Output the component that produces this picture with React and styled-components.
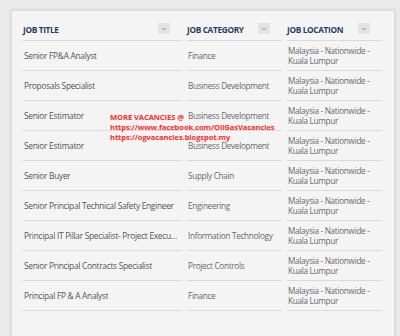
import React from 'react';
import styled, { createGlobalStyle } from 'styled-components';

const GlobalStyle = createGlobalStyle`
  html, body {
    margin: 0;
    padding: 0;
    background: #eaeaea;
    height: 336px;
    overflow: hidden;
  }
`;

const Panel = styled.div`
  position: relative;
  margin: 10px 5px 0 11px;
  height: 340px;
  box-sizing: border-box;
  padding: 0 13px 0 12px;
  background: #f4f4f4;
  border: 1px solid #dcdcdc;
  border-bottom: none;
  box-shadow: 0 0 3px rgba(0, 0, 0, 0.12);
  font-family: 'Open Sans', 'DejaVu Sans', sans-serif;
`;

const Grid = styled.div`
  display: grid;
  grid-template-columns: 159px 95px 95px;
  column-gap: 5px;
  margin-left: -1px;
`;

const HeadCell = styled.div`
  height: 30px;
  box-sizing: border-box;
  display: flex;
  align-items: center;
  justify-content: space-between;
  padding: 8px 12px 0 0;
  border-bottom: 1px solid #dadada;
  font-size: 8.3px;
  font-weight: 700;
  color: #253f60;
  letter-spacing: -0.35px;
`;

const SortButton = styled.span`
  width: 12px;
  height: 11px;
  background: #e3e3e3;
  display: flex;
  align-items: center;
  justify-content: center;
  margin-top: -2px;
`;

const Cell = styled.div`
  height: 30px;
  box-sizing: border-box;
  display: flex;
  align-items: center;
  padding: 1px ${(p) => (p.$small ? '4px' : '2px')} 0 1px;
  border-bottom: 1px solid #dadada;
  font-size: ${(p) => (p.$small ? '8.2px' : '8.4px')};
  letter-spacing: -0.3px;
  line-height: 10px;
  color: ${(p) => (p.$small ? '#6a6a6a' : '#555')};
  min-width: 0;
`;

const Clip = styled.span`
  display: block;
  white-space: nowrap;
  overflow: hidden;
  text-overflow: ellipsis;
`;

const Promo = styled.div`
  position: absolute;
  left: 98px;
  top: 101px;
  font-family: 'Open Sans', 'DejaVu Sans', sans-serif;
  font-size: 7.6px;
  font-weight: 700;
  letter-spacing: -0.1px;
  line-height: 10px;
  color: #ff2b2b;
`;

const jobs = [
  ['Senior FP&A Analyst', 'Finance'],
  ['Proposals Specialist', 'Business Development'],
  ['Senior Estimator', 'Business Development'],
  ['Senior Estimator', 'Business Development'],
  ['Senior Buyer', 'Supply Chain'],
  ['Senior Principal Technical Safety Engineer', 'Engineering'],
  ['Principal IT Pillar Specialist- Project Execution', 'Information Technology'],
  ['Senior Principal Contracts Specialist', 'Project Controls'],
  ['Principal FP & A Analyst', 'Finance'],
];

const Chevron = () => (
  <svg width="6" height="4" viewBox="0 0 6 4">
    <path d="M1 1 L3 3 L5 1" fill="none" stroke="#7c9cc4" strokeWidth="1" />
  </svg>
);

export default function App() {
  return (
    <>
      <GlobalStyle />
      <Panel>
        <Grid>
          {['JOB TITLE', 'JOB CATEGORY', 'JOB LOCATION'].map((h) => (
            <HeadCell key={h}>
              {h}
              <SortButton>
                <Chevron />
              </SortButton>
            </HeadCell>
          ))}
          {jobs.map(([title, cat], i) => (
            <React.Fragment key={i}>
              <Cell>
                <Clip>{title}</Clip>
              </Cell>
              <Cell $small>{cat}</Cell>
              <Cell $small>
                <span>
                  Malaysia - Nationwide -
                  <br />
                  Kuala Lumpur
                </span>
              </Cell>
            </React.Fragment>
          ))}
        </Grid>
        <Promo>
          MORE VACANCIES @
          <br />
          https://www.facebook.com/OilGasVacancies
          <br />
          https://ogvacancies.blogspot.my
        </Promo>
      </Panel>
    </>
  );
}
